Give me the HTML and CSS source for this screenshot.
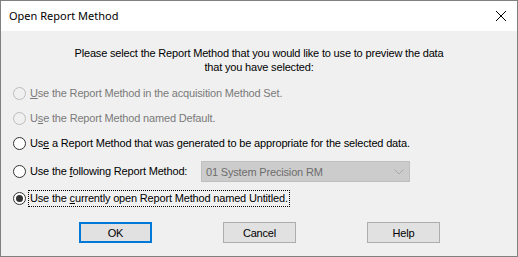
FILE: index.html
```html
<!DOCTYPE html>
<html>
<head>
<meta charset="utf-8">
<link rel="stylesheet" href="styles.css">
</head>
<body>
<div class="window">
  <div class="titlebar">
    <span class="title">Open Report Method</span>
    <svg class="close" width="12" height="12" viewBox="0 0 12 12"><path d="M1 1 L11 11 M11 1 L1 11" stroke="#000" stroke-width="1" fill="none"/></svg>
  </div>
  <div class="client">
    <div class="message">Please select the Report Method that you would like to use to preview the data<br>that you have selected:</div>
    <div class="row r1 disabled"><span class="radio"></span><span class="label"><u>U</u>se the Report Method in the acquisition Method Set.</span></div>
    <div class="row r2 disabled"><span class="radio"></span><span class="label">U<u>s</u>e the Report Method named Default.</span></div>
    <div class="row r3"><span class="radio"></span><span class="label">Us<u>e</u> a Report Method that was generated to be appropriate for the selected data.</span></div>
    <div class="row r4"><span class="radio"></span><span class="label lab4">Use the <u>f</u>ollowing Report Method:</span>
      <div class="combo"><span>01 System Precision RM</span>
        <svg class="chev" width="10" height="6" viewBox="0 0 10 6"><path d="M0.5 0.5 L5 5 L9.5 0.5" stroke="#a8a8a8" stroke-width="1" fill="none"/></svg>
      </div>
    </div>
    <div class="row r5"><span class="radio checked"></span><span class="label focus">Use the <u>c</u>urrently open Report Method named Untitled.</span></div>
    <div class="buttons">
      <div class="btn default">OK</div>
      <div class="btn">Cancel</div>
      <div class="btn">Help</div>
    </div>
  </div>
</div>
</body>
</html>
```
FILE: styles.css
```css
html, body { margin: 0; padding: 0; }
body { width: 518px; height: 257px; overflow: hidden; background: #f0f0f0; }
.window {
  width: 518px; height: 257px; box-sizing: border-box;
  border: 1px solid #808080;
  display: flex; flex-direction: column;
  background: #f0f0f0;
}
.titlebar {
  height: 30px; background: #fff;
  display: flex; align-items: center; justify-content: space-between;
  padding: 0 10px 0 8px;
}
.title { font-family: "Segoe UI", "Noto Sans", sans-serif; font-size: 11px; color: #000; margin-top: -1px; }
.close { margin-right: 0; margin-top: -1px; }
.client {
  flex: 1;
  font-family: "Liberation Sans", Arial, sans-serif; font-size: 11px; color: #000;
  letter-spacing: -0.17px;
  display: flex; flex-direction: column;
  padding-top: 15px;
}
.message { text-align: center; line-height: 14px; height: 28px; }
.row { display: flex; align-items: center; height: 16px; padding-left: 12px; }
.r1 { margin-top: 11px; }
.r2 { margin-top: 9px; }
.r3 { margin-top: 9px; }
.r4 { margin-top: 10px; height: 21px; }
.r5 { margin-top: 8px; }
.radio {
  width: 13px; height: 13px; box-sizing: border-box; border-radius: 50%;
  border: 1px solid #333; background: #fff; flex: none;
  display: flex; align-items: center; justify-content: center;
}
.disabled .radio { border-color: #bcbcbc; background: #f0f0f0; }
.disabled .label { color: #7a7a7a; }
.radio.checked::after { content: ""; width: 7px; height: 7px; border-radius: 50%; background: #333; }
.label { margin-left: 3px; padding: 1px 1px; line-height: 13px; white-space: nowrap; }
.label u { text-decoration-thickness: 1px; text-underline-offset: 1px; }
.focus { outline: 1px dotted #000; outline-offset: 0; }
.lab4 { width: 170px; }
.combo {
  width: 209px; height: 21px; box-sizing: border-box;
  background: #cccccc; border: 1px solid #bfbfbf; color: #6d6d6d;
  display: flex; align-items: center; justify-content: space-between;
  padding: 0 5px 0 4px; font-size: 11px;
}
.chev { margin-top: 1px; }
.buttons { display: flex; margin-top: 16px; padding-left: 78px; gap: 71px; }
.btn {
  width: 73px; height: 21px; box-sizing: border-box;
  background: #e1e1e1; border: 1px solid #adadad;
  display: flex; align-items: center; justify-content: center;
  font-size: 11px;
}
.btn.default { border: 2px solid #0078d7; }
```
